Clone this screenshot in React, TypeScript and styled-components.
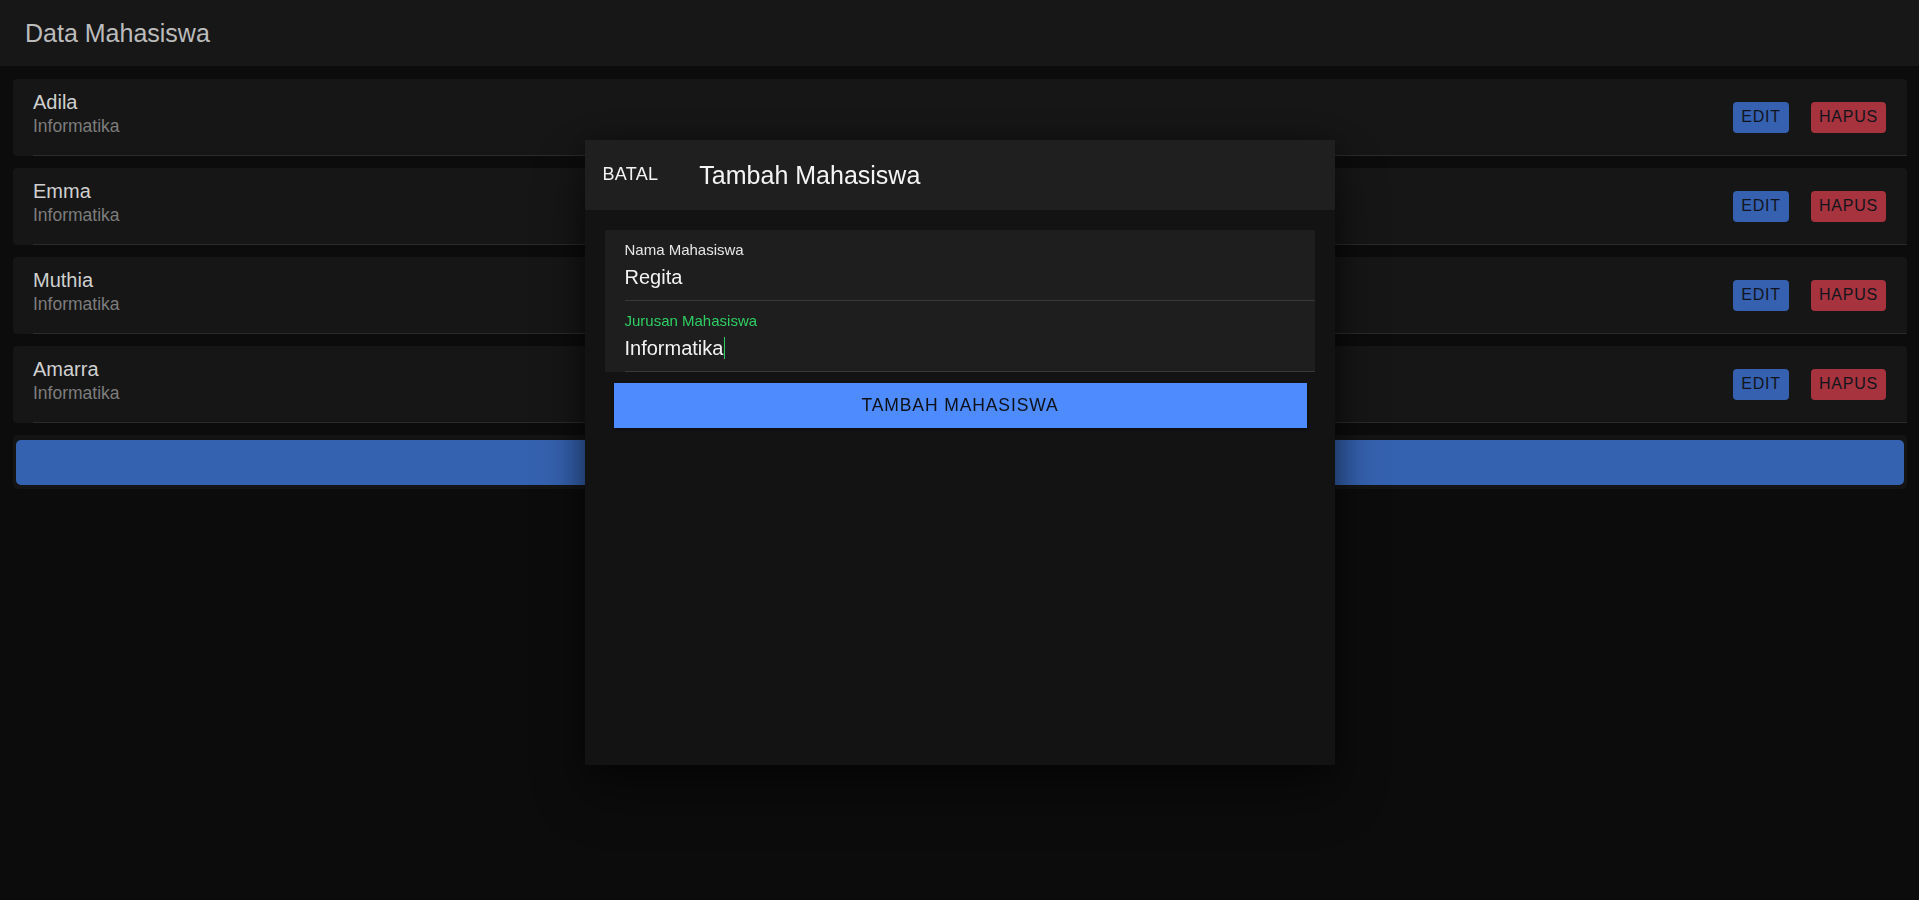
import React from "react";
import styled, { createGlobalStyle } from "styled-components";

const GlobalStyle = createGlobalStyle`
  html, body {
    margin: 0;
    padding: 0;
    background: #0c0c0c;
    font-family: "Liberation Sans", Arial, sans-serif;
  }
  * {
    box-sizing: border-box;
  }
`;

const Page = styled.div`
  min-height: 900px;
  background: #0c0c0c;
`;

const Header = styled.header`
  height: 66px;
  display: flex;
  align-items: center;
  padding: 0 25px;
  background: #171717;
`;

const Title = styled.h1`
  margin: 0;
  font-size: 25px;
  font-weight: 400;
  color: #bcbcbc;
`;

const List = styled.div`
  display: flex;
  flex-direction: column;
  gap: 12px;
  padding: 13px 12px 0 13px;
`;

const Card = styled.div`
  height: 77px;
  display: flex;
  padding-left: 20px;
  background: #161616;
  border-radius: 4px;
`;

const CardInner = styled.div`
  flex: 1;
  display: flex;
  align-items: center;
  padding-right: 21px;
  border-bottom: 1px solid #2b2b2b;
`;

const Info = styled.div`
  flex: 1;
  display: flex;
  flex-direction: column;
  gap: 2px;
  padding-bottom: 7px;
`;

const Name = styled.div`
  font-size: 20px;
  line-height: 24px;
  color: #d0d0d0;
`;

const Major = styled.div`
  font-size: 17.5px;
  line-height: 21px;
  color: #7d7d7d;
`;

const Actions = styled.div`
  display: flex;
  gap: 22px;
`;

const SmallButton = styled.button<{ $tone: "blue" | "red" }>`
  height: 31px;
  padding: 0 8px;
  border: none;
  border-radius: 4px;
  font-family: inherit;
  font-size: 16px;
  letter-spacing: 0.8px;
  text-transform: uppercase;
  color: #12141c;
  background: ${(p) => (p.$tone === "blue" ? "#3561b0" : "#a6333d")};
`;

const AddBox = styled.div`
  padding: 5px 3px 4px;
  background: #141414;
  border-radius: 5px;
`;

const AddBar = styled.button`
  display: block;
  width: 100%;
  height: 45px;
  border: none;
  border-radius: 5px;
  background: #3562b0;
  font-family: inherit;
  font-size: 17.5px;
  letter-spacing: 0.9px;
  color: #12141c;
`;

const Modal = styled.div`
  position: fixed;
  left: 50%;
  top: 140px;
  width: 750px;
  height: 625px;
  margin-left: -375px;
  background: #131313;
  box-shadow: 0 28px 48px rgba(0, 0, 0, 0.45), 0 0 24px rgba(0, 0, 0, 0.35);
  display: flex;
  flex-direction: column;
`;

const ModalHeader = styled.div`
  height: 70px;
  display: flex;
  align-items: center;
  gap: 41px;
  padding-left: 18px;
  background: #1f1f1f;
`;

const CancelButton = styled.button`
  padding: 0;
  border: none;
  background: none;
  font-family: inherit;
  font-size: 18px;
  letter-spacing: 0.3px;
  color: #f2f2f2;
  margin-top: -2px;
`;

const ModalTitle = styled.h2`
  margin: 0;
  font-size: 25px;
  font-weight: 400;
  color: #f4f4f4;
`;

const ModalBody = styled.div`
  padding: 20px 20px 0;
`;

const Form = styled.div`
  background: #1e1e1e;
`;

const Field = styled.div`
  margin-left: 20px;
  padding: 11px 0 11px;
  border-bottom: 1px solid #383838;
  display: flex;
  flex-direction: column;
  gap: 6px;
`;

const FieldLabel = styled.div<{ $focused?: boolean }>`
  font-size: 15px;
  line-height: 18px;
  color: ${(p) => (p.$focused ? "#2fce63" : "#e6e6e6")};
`;

const FieldValue = styled.div`
  font-size: 20px;
  line-height: 24px;
  color: #f2f2f2;
  display: flex;
  align-items: center;
`;

const Caret = styled.span`
  display: inline-block;
  width: 1px;
  height: 22px;
  margin-left: 1px;
  background: #2fce63;
`;

const SubmitButton = styled.button`
  display: block;
  width: 693px;
  height: 45px;
  margin: 11px 0 0 29px;
  border: none;
  background: #4d8bff;
  box-shadow: 0 2px 3px rgba(0, 0, 0, 0.3);
  font-family: inherit;
  font-size: 17.5px;
  letter-spacing: 0.9px;
  color: #0e1117;
  text-transform: uppercase;
`;

const students = [
  { name: "Adila", major: "Informatika" },
  { name: "Emma", major: "Informatika" },
  { name: "Muthia", major: "Informatika" },
  { name: "Amarra", major: "Informatika" },
];

export default function App() {
  return (
    <Page>
      <GlobalStyle />
      <Header>
        <Title>Data Mahasiswa</Title>
      </Header>
      <List>
        {students.map((s, index) => (
          <Card key={`student_${s.name}_${index}`}>
            <CardInner>
              <Info>
                <Name>{s.name}</Name>
                <Major>{s.major}</Major>
              </Info>
              <Actions>
                <SmallButton $tone="blue">Edit</SmallButton>
                <SmallButton $tone="red">Hapus</SmallButton>
              </Actions>
            </CardInner>
          </Card>
        ))}
        <AddBox>
          <AddBar />
        </AddBox>
      </List>

      <Modal>
        <ModalHeader>
          <CancelButton>BATAL</CancelButton>
          <ModalTitle>Tambah Mahasiswa</ModalTitle>
        </ModalHeader>
        <ModalBody>
          <Form>
            <Field>
              <FieldLabel>Nama Mahasiswa</FieldLabel>
              <FieldValue>Regita</FieldValue>
            </Field>
            <Field>
              <FieldLabel $focused>Jurusan Mahasiswa</FieldLabel>
              <FieldValue>
                Informatika
                <Caret />
              </FieldValue>
            </Field>
          </Form>
        </ModalBody>
        <SubmitButton>Tambah Mahasiswa</SubmitButton>
      </Modal>
    </Page>
  );
}
